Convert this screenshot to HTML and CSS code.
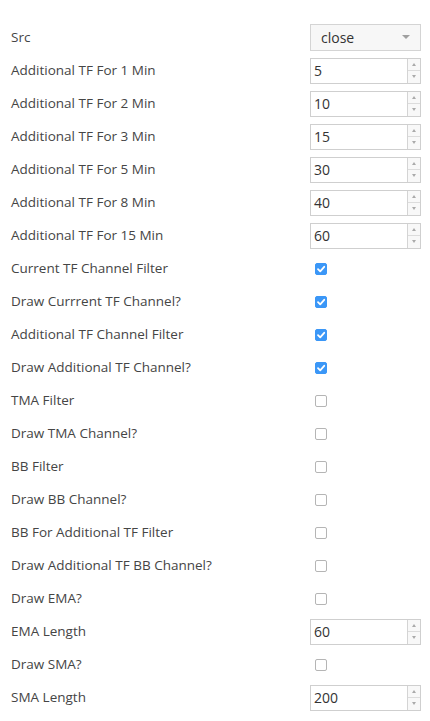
FILE: index.html
```html
<!DOCTYPE html>
<html>
<head>
<meta charset="utf-8">
<link rel="stylesheet" href="styles.css">
</head>
<body>
<div class="form">
  <div class="row"><span class="label">Src</span><div class="ctrl"><div class="select"><span>close</span><span class="caret"></span></div></div></div>
  <div class="row"><span class="label">Additional TF For 1 Min</span><div class="ctrl"><div class="num"><span class="val">5</span><div class="spin"><div class="up"><i></i></div><div class="down"><i></i></div></div></div></div></div>
  <div class="row"><span class="label">Additional TF For 2 Min</span><div class="ctrl"><div class="num"><span class="val">10</span><div class="spin"><div class="up"><i></i></div><div class="down"><i></i></div></div></div></div></div>
  <div class="row"><span class="label">Additional TF For 3 Min</span><div class="ctrl"><div class="num"><span class="val">15</span><div class="spin"><div class="up"><i></i></div><div class="down"><i></i></div></div></div></div></div>
  <div class="row"><span class="label">Additional TF For 5 Min</span><div class="ctrl"><div class="num"><span class="val">30</span><div class="spin"><div class="up"><i></i></div><div class="down"><i></i></div></div></div></div></div>
  <div class="row"><span class="label">Additional TF For 8 Min</span><div class="ctrl"><div class="num"><span class="val">40</span><div class="spin"><div class="up"><i></i></div><div class="down"><i></i></div></div></div></div></div>
  <div class="row"><span class="label">Additional TF For 15 Min</span><div class="ctrl"><div class="num"><span class="val">60</span><div class="spin"><div class="up"><i></i></div><div class="down"><i></i></div></div></div></div></div>
  <div class="row"><span class="label">Current TF Channel Filter</span><div class="ctrl"><span class="cb on"><svg viewBox="0 0 12 12" width="12" height="12"><path d="M3 6.2 L5.2 8.4 L9.2 3.8" fill="none" stroke="#fff" stroke-width="1.8" stroke-linecap="round" stroke-linejoin="round"/></svg></span></div></div>
  <div class="row"><span class="label">Draw Currrent TF Channel?</span><div class="ctrl"><span class="cb on"><svg viewBox="0 0 12 12" width="12" height="12"><path d="M3 6.2 L5.2 8.4 L9.2 3.8" fill="none" stroke="#fff" stroke-width="1.8" stroke-linecap="round" stroke-linejoin="round"/></svg></span></div></div>
  <div class="row"><span class="label">Additional TF Channel Filter</span><div class="ctrl"><span class="cb on"><svg viewBox="0 0 12 12" width="12" height="12"><path d="M3 6.2 L5.2 8.4 L9.2 3.8" fill="none" stroke="#fff" stroke-width="1.8" stroke-linecap="round" stroke-linejoin="round"/></svg></span></div></div>
  <div class="row"><span class="label">Draw Additional TF Channel?</span><div class="ctrl"><span class="cb on"><svg viewBox="0 0 12 12" width="12" height="12"><path d="M3 6.2 L5.2 8.4 L9.2 3.8" fill="none" stroke="#fff" stroke-width="1.8" stroke-linecap="round" stroke-linejoin="round"/></svg></span></div></div>
  <div class="row"><span class="label">TMA Filter</span><div class="ctrl"><span class="cb"></span></div></div>
  <div class="row"><span class="label">Draw TMA Channel?</span><div class="ctrl"><span class="cb"></span></div></div>
  <div class="row"><span class="label">BB Filter</span><div class="ctrl"><span class="cb"></span></div></div>
  <div class="row"><span class="label">Draw BB Channel?</span><div class="ctrl"><span class="cb"></span></div></div>
  <div class="row"><span class="label">BB For Additional TF Filter</span><div class="ctrl"><span class="cb"></span></div></div>
  <div class="row"><span class="label">Draw Additional TF BB Channel?</span><div class="ctrl"><span class="cb"></span></div></div>
  <div class="row"><span class="label">Draw EMA?</span><div class="ctrl"><span class="cb"></span></div></div>
  <div class="row"><span class="label">EMA Length</span><div class="ctrl"><div class="num"><span class="val">60</span><div class="spin"><div class="up"><i></i></div><div class="down"><i></i></div></div></div></div></div>
  <div class="row"><span class="label">Draw SMA?</span><div class="ctrl"><span class="cb"></span></div></div>
  <div class="row"><span class="label">SMA Length</span><div class="ctrl"><div class="num"><span class="val">200</span><div class="spin"><div class="up"><i></i></div><div class="down"><i></i></div></div></div></div></div>
</div>
</body>
</html>
```
FILE: styles.css
```css
html, body { margin: 0; padding: 0; background: #fff; }
body { font-family: "Open Sans", "DejaVu Sans", sans-serif; color: #454545; }
.form { padding: 21px 9px 0 11px; display: flex; flex-direction: column; }
.row { height: 33px; display: flex; align-items: center; justify-content: space-between; }
.label { font-size: 13.5px; line-height: 16px; padding-bottom: 2px; }
.ctrl { width: 111px; display: flex; align-items: center; }
.select {
  box-sizing: border-box; width: 111px; height: 27px;
  border: 1px solid #d4d4d4; background: #f7f7f7;
  display: flex; align-items: center; justify-content: space-between;
  padding: 0 10px 1px 10px; font-size: 14px; color: #333;
}
.caret { width: 0; height: 0; border-left: 4px solid transparent; border-right: 4px solid transparent; border-top: 4px solid #a0a0a0; }
.num {
  box-sizing: border-box; width: 111px; height: 26px;
  border: 1px solid #cfcfcf; background: #fff;
  display: flex; align-items: stretch; justify-content: space-between;
}
.val { font-size: 14px; color: #333; padding-left: 3px; padding-bottom: 1px; display: flex; align-items: center; }
.spin { width: 12px; border-left: 1px solid #d4d4d4; display: flex; flex-direction: column; background: #f8f8f8; }
.spin .up, .spin .down { flex: 1; display: flex; align-items: center; justify-content: center; }
.spin .up { border-bottom: 1px solid #dcdcdc; }
.spin .up i { width: 0; height: 0; border-left: 2.5px solid transparent; border-right: 2.5px solid transparent; border-bottom: 3px solid #aaa; }
.spin .down i { width: 0; height: 0; border-left: 2.5px solid transparent; border-right: 2.5px solid transparent; border-top: 3px solid #aaa; }
.cb {
  box-sizing: border-box; width: 12px; height: 12px; margin-left: 5px;
  border: 1px solid #b5b5b5; border-radius: 2px; background: #fff; display: block;
}
.cb.on { background: #3b97f7; border-color: #3b97f7; }
.cb.on svg { display: block; margin: -1px; }
```
